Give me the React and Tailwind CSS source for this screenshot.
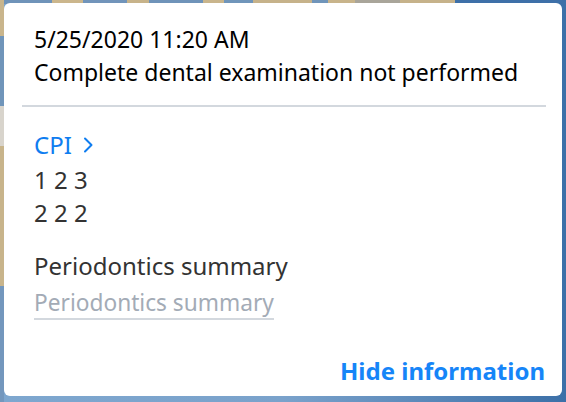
import React from "react";

function Chevron() {
  return (
    <svg width="10" height="16" viewBox="0 0 10 16" className="ml-[11px]" fill="none">
      <polyline points="2,1.5 8.5,8 2,14.5" stroke="#0f7df0" strokeWidth="2" strokeLinecap="round" strokeLinejoin="round" />
    </svg>
  );
}

export default function App() {
  const font = { fontFamily: '"Noto Sans", "Open Sans", sans-serif' };
  return (
    <div
      className="relative w-[566px] h-[402px] overflow-hidden bg-gradient-to-r from-[#7ea7cf] via-[#7aa2cb] to-[#3c70a8]"
      style={font}
    >
      {/* blurred backdrop hints */}
      <div className="absolute left-0 top-0 flex h-[4px] w-full">
        <div className="w-[4px] bg-[#c9b58c]" />
        <div className="w-[48px] bg-[#6f93b9]" />
        <div className="w-[31px] bg-[#cbb68c]" />
        <div className="w-[44px] bg-[#7194ba]" />
        <div className="w-[22px] bg-[#c7b38a]" />
        <div className="w-[54px] bg-[#6f93b9]" />
        <div className="w-[21px] bg-[#c9b58c]" />
        <div className="w-[29px] bg-[#7095ba]" />
        <div className="w-[59px] bg-[#c6b28a]" />
        <div className="w-[16px] bg-[#7095ba]" />
        <div className="w-[27px] bg-[#c8b48b]" />
        <div className="w-[45px] bg-[#a9a59a]" />
        <div className="w-[55px] bg-[#c6b28a]" />
        <div className="flex-1 bg-[#3e70a8]" />
      </div>
      <div className="absolute left-0 top-0 flex h-full w-[4px] flex-col">
        <div className="h-[36px] bg-[#c9b58c]" />
        <div className="h-[70px] bg-[#7095ba]" />
        <div className="h-[40px] bg-[#d8d4cc]" />
        <div className="h-[140px] bg-[#c8b48b]" />
        <div className="flex-1 bg-[#7397bd]" />
      </div>

      <div className="relative ml-[4px] mt-[3px] flex h-[393px] w-[558px] flex-col rounded-[6px] bg-white">
        <div className="px-[30px] pt-[20px] text-[23px] leading-[33px] text-black">
          <div>5/25/2020 11:20 AM</div>
          <div>Complete dental examination not performed</div>
        </div>
        <div className="ml-[18px] mr-[16px] mt-[16px] h-[2px] bg-[#d3d8de]" />
        <div className="flex flex-col items-start px-[30px] pt-[19px] text-[24px]">
          <div className="flex items-center leading-[37px] text-[#0f7df0]">
            <span>CPI</span>
            <Chevron />
          </div>
          <div className="leading-[33px] text-[#333333]">1 2 3</div>
          <div className="leading-[33px] text-[#333333]">2 2 2</div>
          <div className="mt-[20px] leading-[33px] text-[#333333]">Periodontics summary</div>
          <div className="mt-[6px] border-b-2 border-[#d3d8de] text-[22.7px] leading-[30px] text-[#a3abb6]">
            Periodontics summary
          </div>
        </div>
        <div className="mt-auto flex justify-end pb-[9px] pr-[17px]">
          <span className="text-[24px] font-bold leading-[33px] text-[#1685f8]">Hide information</span>
        </div>
      </div>
    </div>
  );
}
